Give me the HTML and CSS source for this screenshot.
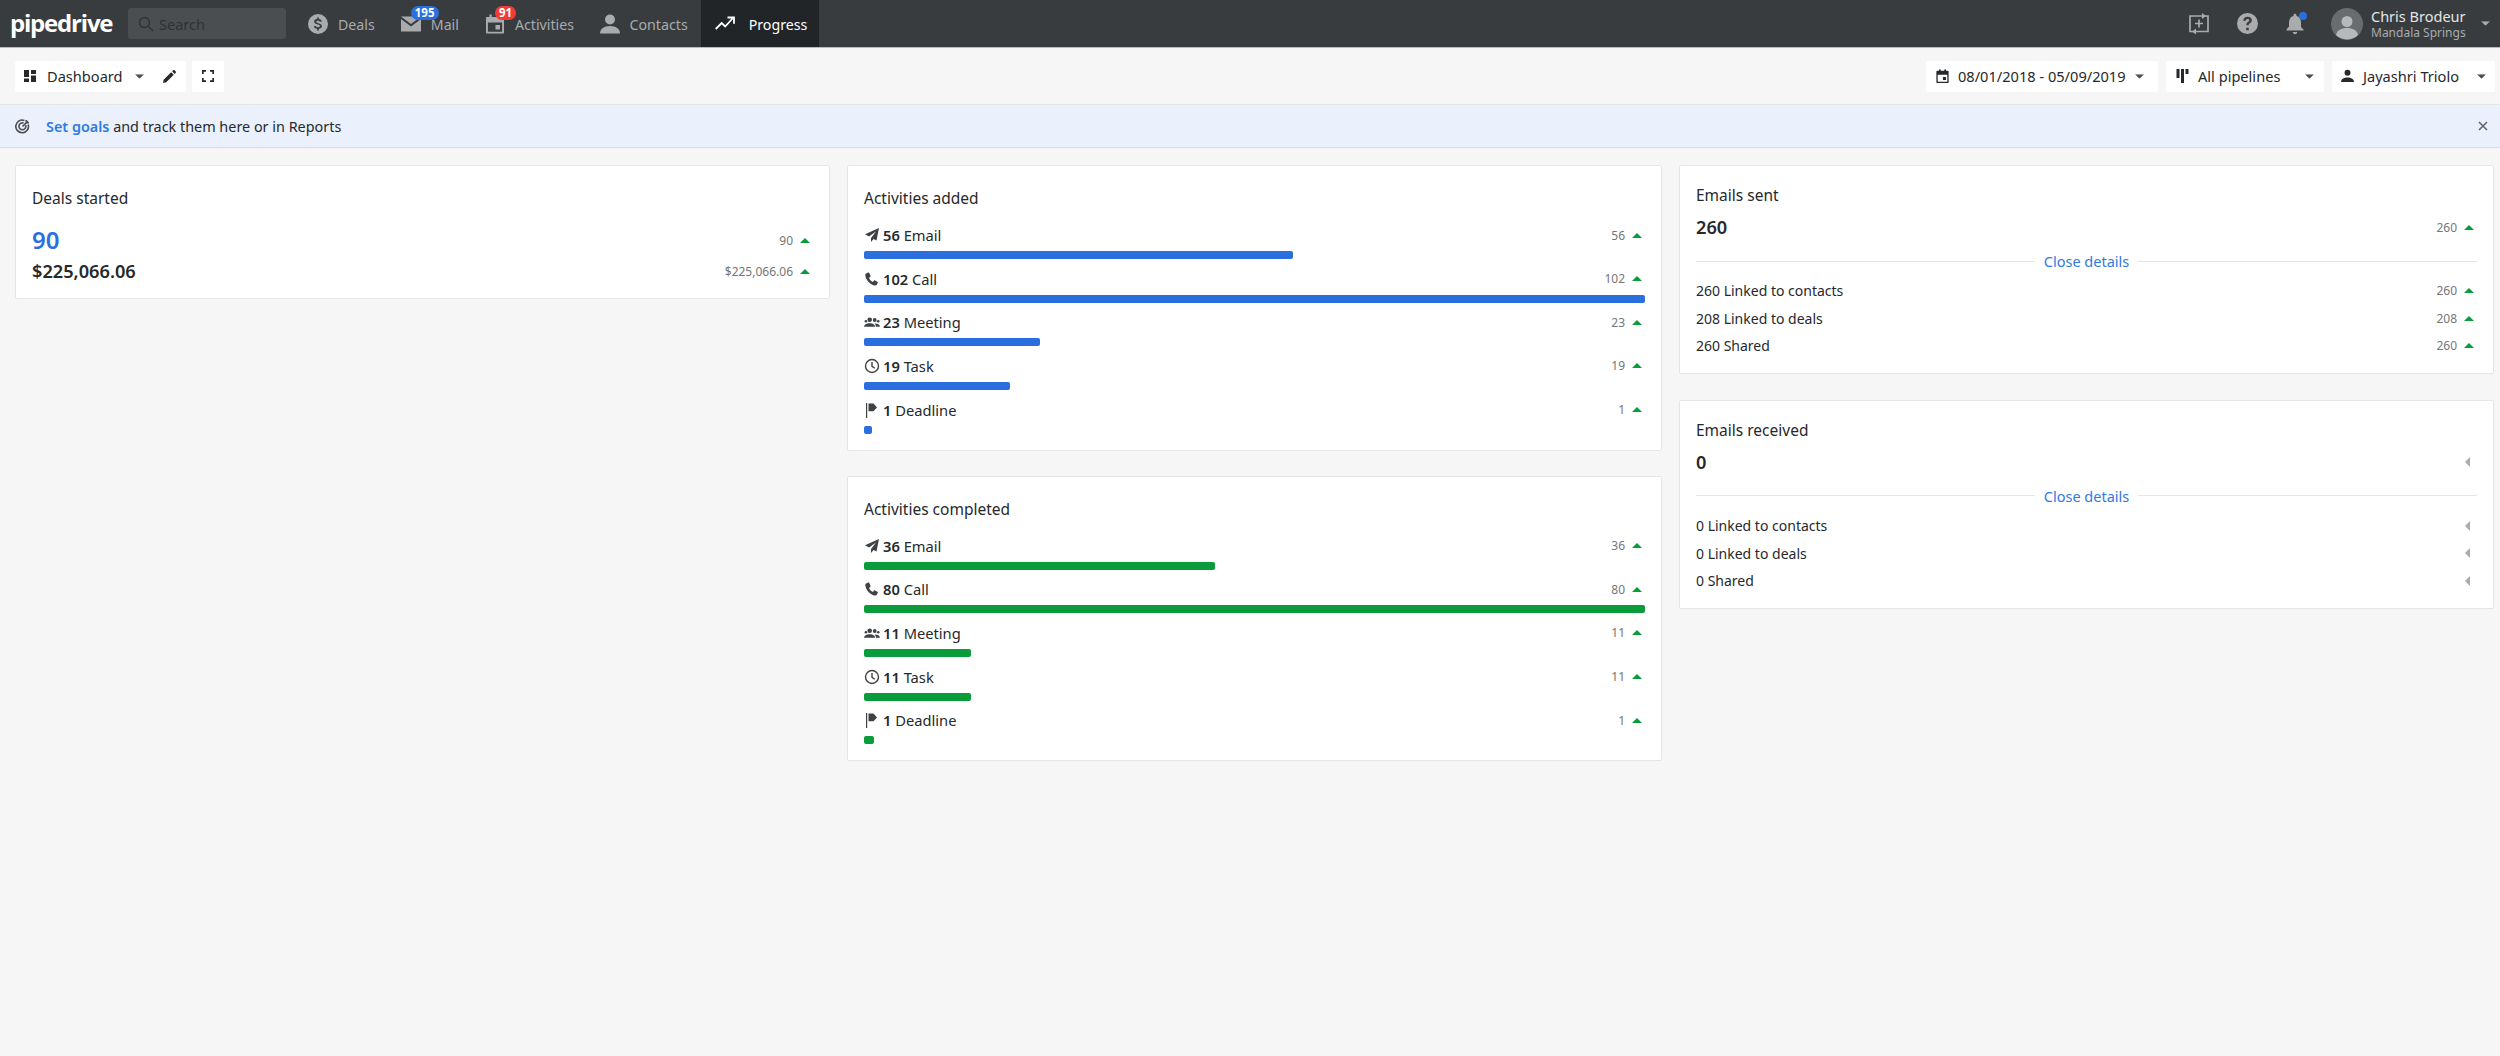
FILE: index.html
```html
<!DOCTYPE html>
<html lang="en">
<head>
<meta charset="utf-8">
<title>Pipedrive - Progress</title>
<link rel="stylesheet" href="styles.css">
</head>
<body>
<svg class="defs" width="0" height="0" aria-hidden="true">
  <defs>
    <symbol id="i-email" viewBox="0 0 16 16"><path d="M15 1 1 7.2l4 2.3L12 4.5 7 11v4l2.6-3 2.9 1.6z"/></symbol>
    <symbol id="i-call" viewBox="0 0 16 16"><path d="M4.300 1.500 2 2.600c-.6.3-.8.9-.7 1.600.8 5.200 4.600 9.400 9.900 10.400.7.100 1.300-.2 1.600-.8l1-2.100c.2-.4 0-.8-.3-1l-2.500-1.300c-.3-.2-.7-.1-1 .2l-1.100 1.400C7.100 10.100 5.900 8.800 5 6.900l1.300-1.200c.3-.3.4-.6.200-1L5.300 1.900c-.2-.4-.6-.5-1-.4z"/></symbol>
    <symbol id="i-meeting" viewBox="0 0 16 16"><circle cx="5.700" cy="5.700" r="2.300"/><circle cx="10.700" cy="6" r="1.900"/><circle cx="14.200" cy="7.300" r="1.300"/><circle cx="1.900" cy="7.300" r="1.300"/><path d="M.1 12.700c0-1.800 2.500-3.400 5.600-3.400s5.400 1.600 5.400 3.400zM11.900 12.700c0-1.300-.4-2.300-1.300-3.200 2.500-.1 5.300 1.100 5.300 3.200z"/></symbol>
    <symbol id="i-task" viewBox="0 0 16 16"><circle cx="8" cy="8" r="6.500" fill="none" stroke="currentColor" stroke-width="1.400"/><path d="M8 4v4.300l2.800 2" fill="none" stroke="currentColor" stroke-width="1.400"/></symbol>
    <symbol id="i-flag" viewBox="0 0 16 16"><path d="M2 1h1.200v15H2zM4.500 1.500h5l3.500 4-3.500 3.700h-5z"/></symbol>
    <symbol id="i-caret" viewBox="0 0 10 5"><path d="M0 0h10L5 5z"/></symbol>
    <symbol id="i-up" viewBox="0 0 10 5"><path d="M5 0l5 5H0z"/></symbol>
    <symbol id="i-flat" viewBox="0 0 5 10"><path d="M5 0v10L0 5z"/></symbol>
  </defs>
</svg>

<header class="topbar">
  <span class="logo">pipedrive</span>
  <div class="search">
    <svg class="search-icon" viewBox="0 0 16 16"><circle cx="6.500" cy="6.500" r="5" fill="none" stroke="currentColor" stroke-width="1.300"/><path d="m10.300 10.300 4.700 4.700" stroke="currentColor" stroke-width="1.500"/></svg>
    <span>Search</span>
  </div>
  <nav class="nav">
    <a class="nav-item">
      <svg class="nav-icon" viewBox="0 0 20 20"><path fill-rule="evenodd" d="M10 0a10 10 0 1 0 0 20 10 10 0 0 0 0-20zm-.9 3.500h1.800v1.600c1.500.2 2.600 1 2.800 2.700h-2c-.1-.7-.7-1.100-1.700-1.100-1.100 0-1.700.4-1.700 1.100 0 .7.500 1 2 1.400 2.100.5 3.600 1.100 3.600 3 0 1.500-1.100 2.400-3 2.600v1.700H9.100v-1.700c-1.800-.2-3-1.200-3.100-2.900h2c.1.900.8 1.300 2 1.300s1.800-.4 1.800-1.200c0-.7-.5-1-2.100-1.400-2-.5-3.500-1.100-3.500-3 0-1.400 1.100-2.300 2.900-2.500z"/></svg>
      <span class="nav-text">Deals</span>
    </a>
    <a class="nav-item">
      <svg class="nav-icon" viewBox="0 0 20 20"><path d="M0 2.500h20L10 10zM0 5v12.500h20V5L10 12.500z"/></svg>
      <span class="nav-text">Mail</span>
      <b class="badge badge-blue">195</b>
    </a>
    <a class="nav-item">
      <svg class="nav-icon" viewBox="0 0 20 20"><path fill-rule="evenodd" d="M2 3h2.500V.5h2.300V3h6.400V.5h2.300V3H18c.6 0 1 .4 1 1v14.500c0 .6-.4 1-1 1H2c-.6 0-1-.4-1-1V4c0-.6.4-1 1-1zm.9 5.500v9.200h14.200V8.500zM10.500 11H15v4.500h-4.500z"/></svg>
      <span class="nav-text">Activities</span>
      <b class="badge badge-red">91</b>
    </a>
    <a class="nav-item">
      <svg class="nav-icon" viewBox="0 0 20 20"><circle cx="10" cy="5.500" r="5"/><path d="M0 19.500c0-4.800 4.500-7.500 10-7.500s10 2.700 10 7.500z"/></svg>
      <span class="nav-text">Contacts</span>
    </a>
    <a class="nav-item nav-active">
      <svg class="nav-icon" viewBox="0 0 20 20"><path d="m.7 15 6-6 3.500 3.500 7.300-8M12.500 3.500H19v6.300" fill="none" stroke="currentColor" stroke-width="1.800"/></svg>
      <span class="nav-text">Progress</span>
    </a>
  </nav>
  <div class="top-right">
    <svg class="tool-icon tool-add" viewBox="0 0 20 24"><path d="M13 4H1v15.500h5M7 19.500h12V4h-5M10 7.500v8M6 11.500h8" fill="none" stroke="currentColor" stroke-width="1.700"/><path d="M13 1l4 3-4 3zM7 16.500l-4 3 4 3z"/></svg>
    <svg class="tool-icon" viewBox="0 0 20 20"><path fill-rule="evenodd" d="M10 0a10 10 0 1 0 0 20 10 10 0 0 0 0-20zm-1.200 14h2.400v2.400H8.800zm1.300-10.500c2.400 0 4 1.300 4 3.300 0 1.500-.9 2.300-1.900 3-.8.500-1 .9-1 1.900H8.900c0-1.700.5-2.500 1.500-3.200.8-.5 1.300-.9 1.300-1.600 0-.8-.7-1.300-1.600-1.300-1 0-1.700.6-1.800 1.700H6c.1-2.400 1.700-3.800 4.100-3.800z"/></svg>
    <span class="bell">
      <svg class="bell-icon" viewBox="0 0 18 22"><path d="M9 .8c.9 0 1.500.6 1.500 1.500v.7c3 .7 4.500 3.200 4.500 6.500v4.500l2.500 2.500v1H.5v-1L3 13.500V9.500C3 6.200 4.500 3.700 7.500 3v-.7C7.500 1.400 8.100.8 9 .8zM6.800 19h4.400c0 1.300-1 2.200-2.200 2.200S6.800 20.300 6.800 19z"/></svg>
      <i class="bell-dot"></i>
    </span>
    <div class="user">
      <svg class="avatar" viewBox="0 0 32 32"><circle cx="16" cy="16" r="16" fill="#6a6d70"/><circle cx="16" cy="13.500" r="5.500" fill="#b6b8ba"/><path d="M5 27c1-5 5.500-7 11-7s10 2 11 7a16 16 0 0 1-22 0z" fill="#b6b8ba"/></svg>
      <div class="user-text">
        <span class="user-name">Chris Brodeur</span>
        <span class="user-org">Mandala Springs</span>
      </div>
      <svg class="user-caret" viewBox="0 0 10 5"><use href="#i-caret"/></svg>
    </div>
  </div>
</header>

<section class="toolbar">
  <div class="tool-group">
    <div class="btn btn-dash">
      <svg class="btn-icon" viewBox="0 0 12 12"><path d="M0 0h5v7H0zM7 0h5v4H7zM7 5.500h5V12H7zM0 8.500h5V12H0z"/></svg>
      <span>Dashboard</span>
      <svg class="caret" viewBox="0 0 10 5"><use href="#i-caret"/></svg>
      <svg class="btn-pencil" viewBox="0 0 14 14"><path d="M0 14l.7-3.500L8.800 2.400l2.800 2.800L3.500 13.300zM9.800 1.400 11 .3c.4-.4 1-.4 1.400 0l1.300 1.300c.4.400.4 1 0 1.400l-1.100 1.200z"/></svg>
    </div>
    <div class="btn btn-full">
      <svg class="btn-icon" viewBox="0 0 12 12"><path d="M0 4V0h4v1.700H1.700V4zM8 0h4v4h-1.700V1.700H8zM12 8v4H8v-1.700h2.300V8zM4 12H0V8h1.700v2.300H4z"/></svg>
    </div>
  </div>
  <div class="tool-group tool-end">
    <div class="btn btn-date">
      <svg class="btn-icon-lg" viewBox="0 0 14 16"><path fill-rule="evenodd" d="M1 2h2V.5h2V2h4V.5h2V2h2c.6 0 1 .4 1 1v12c0 .6-.4 1-1 1H1c-.6 0-1-.4-1-1V3c0-.6.4-1 1-1zm.5 4.500v8h11v-8zM7.500 9H11v3.500H7.500z"/></svg>
      <span>08/01/2018 - 05/09/2019</span>
      <svg class="caret" viewBox="0 0 10 5"><use href="#i-caret"/></svg>
    </div>
    <div class="btn btn-pipe">
      <svg class="btn-icon-lg" viewBox="0 0 12 14"><path d="M0 0h3v9H0zM4.500 0h3v14h-3zM9 0h3v5H9z"/></svg>
      <span class="grow">All pipelines</span>
      <svg class="caret" viewBox="0 0 10 5"><use href="#i-caret"/></svg>
    </div>
    <div class="btn btn-user">
      <svg class="btn-icon-lg" viewBox="0 0 14 14"><circle cx="7" cy="3.500" r="3.200"/><path d="M0 13.500c0-3.300 3-5 7-5s7 1.700 7 5z"/></svg>
      <span>Jayashri Triolo</span>
      <svg class="caret" viewBox="0 0 10 5"><use href="#i-caret"/></svg>
    </div>
  </div>
</section>

<section class="banner">
  <svg class="banner-icon" viewBox="0 0 14 14"><path d="M12.300 5.200A5.900 5.900 0 1 1 8.800 1.400M9.900 5.700a3.200 3.200 0 1 1-1.900-1.900M7 7l5-5M10.500 1v2.500H13" fill="none" stroke="currentColor" stroke-width="1.500"/></svg>
  <p class="banner-text"><a class="link-strong">Set goals</a> and track them here or in Reports</p>
  <svg class="banner-close" viewBox="0 0 10 10"><path d="m1 1 8 8M9 1 1 9" stroke="currentColor" stroke-width="1.500"/></svg>
</section>

<main class="grid">
  <div class="col">
    <article class="card card-deals">
      <h2 class="title">Deals started</h2>
      <div class="row-between deal-count"><span class="big-blue">90</span><span class="delta">90<svg class="up" viewBox="0 0 10 5"><use href="#i-up"/></svg></span></div>
      <div class="row-between deal-value"><span class="money">$225,066.06</span><span class="delta">$225,066.06<svg class="up" viewBox="0 0 10 5"><use href="#i-up"/></svg></span></div>
    </article>
  </div>

  <div class="col">
    <article class="card">
      <h2 class="title title-activity">Activities added</h2>
      <div class="metric"><div class="row-between"><span class="label"><svg class="act-icon"><use href="#i-email"/></svg><b>56</b> Email</span><span class="delta">56<svg class="up" viewBox="0 0 10 5"><use href="#i-up"/></svg></span></div><div class="bar bar-blue" style="width:54.9%"></div></div>
      <div class="metric"><div class="row-between"><span class="label"><svg class="act-icon"><use href="#i-call"/></svg><b>102</b> Call</span><span class="delta">102<svg class="up" viewBox="0 0 10 5"><use href="#i-up"/></svg></span></div><div class="bar bar-blue" style="width:100%"></div></div>
      <div class="metric"><div class="row-between"><span class="label"><svg class="act-icon"><use href="#i-meeting"/></svg><b>23</b> Meeting</span><span class="delta">23<svg class="up" viewBox="0 0 10 5"><use href="#i-up"/></svg></span></div><div class="bar bar-blue" style="width:22.55%"></div></div>
      <div class="metric"><div class="row-between"><span class="label"><svg class="act-icon"><use href="#i-task"/></svg><b>19</b> Task</span><span class="delta">19<svg class="up" viewBox="0 0 10 5"><use href="#i-up"/></svg></span></div><div class="bar bar-blue" style="width:18.63%"></div></div>
      <div class="metric"><div class="row-between"><span class="label"><svg class="act-icon"><use href="#i-flag"/></svg><b>1</b> Deadline</span><span class="delta">1<svg class="up" viewBox="0 0 10 5"><use href="#i-up"/></svg></span></div><div class="bar bar-blue" style="width:0.98%"></div></div>
    </article>
    <article class="card">
      <h2 class="title title-activity">Activities completed</h2>
      <div class="metric"><div class="row-between"><span class="label"><svg class="act-icon"><use href="#i-email"/></svg><b>36</b> Email</span><span class="delta">36<svg class="up" viewBox="0 0 10 5"><use href="#i-up"/></svg></span></div><div class="bar bar-green" style="width:45%"></div></div>
      <div class="metric"><div class="row-between"><span class="label"><svg class="act-icon"><use href="#i-call"/></svg><b>80</b> Call</span><span class="delta">80<svg class="up" viewBox="0 0 10 5"><use href="#i-up"/></svg></span></div><div class="bar bar-green" style="width:100%"></div></div>
      <div class="metric"><div class="row-between"><span class="label"><svg class="act-icon"><use href="#i-meeting"/></svg><b>11</b> Meeting</span><span class="delta">11<svg class="up" viewBox="0 0 10 5"><use href="#i-up"/></svg></span></div><div class="bar bar-green" style="width:13.75%"></div></div>
      <div class="metric"><div class="row-between"><span class="label"><svg class="act-icon"><use href="#i-task"/></svg><b>11</b> Task</span><span class="delta">11<svg class="up" viewBox="0 0 10 5"><use href="#i-up"/></svg></span></div><div class="bar bar-green" style="width:13.75%"></div></div>
      <div class="metric"><div class="row-between"><span class="label"><svg class="act-icon"><use href="#i-flag"/></svg><b>1</b> Deadline</span><span class="delta">1<svg class="up" viewBox="0 0 10 5"><use href="#i-up"/></svg></span></div><div class="bar bar-green" style="width:1.25%"></div></div>
    </article>
  </div>

  <div class="col col-emails">
    <article class="card card-email">
      <h2 class="title">Emails sent</h2>
      <div class="row-between email-total"><span class="money">260</span><span class="delta">260<svg class="up" viewBox="0 0 10 5"><use href="#i-up"/></svg></span></div>
      <div class="divider"><a class="link">Close details</a></div>
      <div class="row-between detail"><span>260 Linked to contacts</span><span class="delta">260<svg class="up" viewBox="0 0 10 5"><use href="#i-up"/></svg></span></div>
      <div class="row-between detail"><span>208 Linked to deals</span><span class="delta">208<svg class="up" viewBox="0 0 10 5"><use href="#i-up"/></svg></span></div>
      <div class="row-between detail"><span>260 Shared</span><span class="delta">260<svg class="up" viewBox="0 0 10 5"><use href="#i-up"/></svg></span></div>
    </article>
    <article class="card card-email">
      <h2 class="title">Emails received</h2>
      <div class="row-between email-total"><span class="money">0</span><span class="delta"><svg class="flat" viewBox="0 0 5 10"><use href="#i-flat"/></svg></span></div>
      <div class="divider"><a class="link">Close details</a></div>
      <div class="row-between detail"><span>0 Linked to contacts</span><span class="delta"><svg class="flat" viewBox="0 0 5 10"><use href="#i-flat"/></svg></span></div>
      <div class="row-between detail"><span>0 Linked to deals</span><span class="delta"><svg class="flat" viewBox="0 0 5 10"><use href="#i-flat"/></svg></span></div>
      <div class="row-between detail"><span>0 Shared</span><span class="delta"><svg class="flat" viewBox="0 0 5 10"><use href="#i-flat"/></svg></span></div>
    </article>
  </div>
</main>
</body>
</html>
```

FILE: styles.css
```css
* { box-sizing: border-box; }
html, body { margin: 0; padding: 0; }
body {
  height: 1056px;
  overflow: hidden;
  background: #f6f6f6;
  color: #26292c;
  font-family: "Noto Sans", "Open Sans", sans-serif;
  font-size: 14px;
}
.defs { position: absolute; }
svg { fill: currentColor; display: block; flex: none; }

/* top bar */
.topbar {
  display: flex;
  align-items: center;
  height: 48px;
  background: #383c3f;
  border-bottom: 1px solid #b9babb;
  color: #a9abad;
}
.logo {
  width: 128px;
  height: 47px;
  padding-left: 10px;
  color: #fff;
  font-family: "Open Sans", sans-serif;
  font-size: 24px;
  font-weight: 700;
  letter-spacing: -1.2px;
  line-height: 45px;
}
.search {
  display: flex;
  align-items: center;
  gap: 5px;
  width: 158px;
  height: 31px;
  padding-left: 10px;
  border-radius: 3px;
  background: #4b4e51;
  color: #2f3235;
}
.search-icon { width: 16px; height: 16px; }
.search span { font-size: 14.5px; }
.nav { display: flex; height: 47px; margin-left: 9px; }
.nav-item {
  position: relative;
  display: flex;
  align-items: center;
  gap: 10px;
  padding: 0 13px;
}
.nav-text { padding-top: 2px; font-size: 14.2px; }
.nav-icon { width: 20px; height: 20px; }
.nav-item:nth-child(4) { padding-left: 12.5px; }
.nav-active {
  gap: 14px;
  padding: 0 12px 0 14px;
  background: #212528;
  color: #fff;
}
.badge {
  position: absolute;
  top: 6px;
  height: 14px;
  padding: 0 4px;
  border-radius: 7px;
  color: #fff;
  font-size: 11.5px;
  font-weight: 700;
  line-height: 14px;
}
.badge-blue { left: 23px; background: #2b6fdf; }
.badge-red { left: 23px; background: #f13c36; }
.top-right { display: flex; align-items: center; margin-left: auto; height: 47px; }
.tool-icon { width: 21px; height: 21px; margin-right: 28px; }
.tool-add { width: 20px; height: 24px; margin-right: 28px; }
.bell { position: relative; width: 18px; height: 22px; margin-right: 27px; }
.bell-icon { width: 18px; height: 22px; }
.bell-dot {
  position: absolute;
  top: -1px;
  right: -3px;
  width: 8px;
  height: 8px;
  border-radius: 50%;
  background: #2b6fdf;
}
.user { display: flex; align-items: center; }
.avatar { width: 32px; height: 32px; }
.user-text { display: flex; flex-direction: column; width: 110px; margin-left: 8px; }
.user-name { color: #e3e4e5; font-size: 14.5px; line-height: 17px; }
.user-org { color: #a9abad; font-size: 12px; line-height: 15px; }
.user-caret { width: 9px; height: 5px; margin-right: 10px; }

/* toolbar */
.toolbar {
  display: flex;
  justify-content: space-between;
  align-items: center;
  height: 56px;
  padding: 0 5px 0 15px;
}
.tool-group { display: flex; gap: 8px; }
.tool-group:first-child { gap: 6px; }
.btn {
  display: flex;
  align-items: center;
  height: 31px;
  padding: 0 9px;
  border-radius: 2px;
  background: #fff;
  font-size: 14.6px;
}
.btn-dash { width: 171px; padding-left: 9px; }
.btn-dash span { margin-left: 11px; }
.btn-dash .caret { margin-left: 12px; }
.btn-pencil { width: 13px; height: 13px; margin-left: 19px; }
.btn-full { width: 32px; justify-content: center; padding: 0; }
.btn-icon { width: 12px; height: 12px; }
.btn-icon-lg { width: 13px; height: 14px; }
.caret { width: 9px; height: 5px; color: #4b4e51; }
.btn-date { width: 232px; padding-left: 10px; }
.btn-date span { margin: 0 9px; }
.btn-pipe { width: 158px; padding: 0 10px 0 10px; }
.btn-pipe span { margin-left: 9px; }
.grow { flex: 1; }
.btn-user { width: 163px; padding: 0 9px; }
.btn-user span { flex: 1; margin-left: 9px; }

/* banner */
.banner {
  display: flex;
  align-items: center;
  height: 44px;
  padding: 0 12px 0 15px;
  background: #eaf1fc;
  border-top: 1px solid #e4e5e6;
  border-bottom: 1px solid #d9dbe0;
}
.banner-icon { width: 15px; height: 15px; color: #4b4e51; }
.banner-text { flex: 1; margin: 0 0 0 16px; font-size: 14.4px; }
.banner-close { width: 10px; height: 10px; color: #5d6063; }
.link-strong { color: #317ae2; font-weight: 600; }

/* dashboard */
.grid {
  display: grid;
  grid-template-columns: repeat(3, 815px);
  gap: 17px;
  padding: 17px 0 0 15px;
}
.col { display: flex; flex-direction: column; gap: 25px; }
.col-emails { gap: 26px; }
.card {
  padding: 15px 16px 16px;
  border: 1px solid #e4e5e6;
  border-radius: 2px;
  background: #fff;
}
.card-deals { padding-bottom: 13px; }
.title {
  margin: 0;
  padding-top: 6px;
  font-size: 15.5px;
  font-weight: 400;
  line-height: 22px;
}
.title-activity { margin-bottom: 15px; }
.row-between { display: flex; justify-content: space-between; align-items: center; }
.delta {
  display: flex;
  align-items: center;
  gap: 7px;
  padding-right: 3px;
  color: #747678;
  font-size: 12px;
}
.up { width: 10px; height: 5px; color: #0a9c3a; }
.flat { width: 5px; height: 10px; margin-right: 4px; color: #a9abad; }

.deal-count { margin-top: 16px; height: 30px; }
.big-blue { color: #2b6fdf; font-size: 24px; font-weight: 600; line-height: 30px; }
.deal-value { margin-top: 2px; height: 28px; }
.money { font-size: 18.2px; font-weight: 600; line-height: 28px; }

.metric { margin-bottom: 8.67px; }
.metric:last-child { margin-bottom: 0; }
.metric .row-between { height: 22px; margin-bottom: 5px; }
.label { display: flex; align-items: center; font-size: 14.7px; white-space: pre; }
.label b { font-weight: 600; }
.act-icon { width: 16px; height: 16px; margin-right: 3px; color: #3f4245; }
.bar { height: 8px; min-width: 7px; border-radius: 2px; }
.bar-blue { background: #2b6fdf; }
.bar-green { background: #0a9c3a; }

.card-email { padding: 12px 16px 13px; }
.email-total { margin-top: 7px; height: 28px; }
.divider {
  display: flex;
  align-items: center;
  gap: 9px;
  margin: 8px 0 4px;
  height: 24px;
}
.divider::before, .divider::after {
  content: "";
  flex: 1;
  height: 1px;
  background: #e4e5e6;
}
.link { color: #317ae2; font-size: 14.5px; }
.detail { height: 27.6px; font-size: 14px; }
```
